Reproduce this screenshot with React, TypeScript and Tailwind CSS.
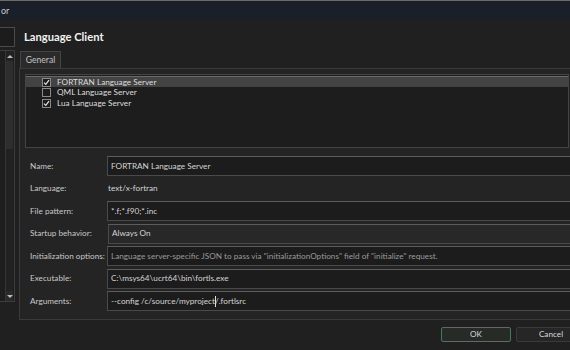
import React from 'react';

const servers = [
  { name: 'FORTRAN Language Server', checked: true, selected: true },
  { name: 'QML Language Server', checked: false, selected: false },
  { name: 'Lua Language Server', checked: true, selected: false },
];

const Check: React.FC<{ on: boolean }> = ({ on }) => (
  <div className="w-[9px] h-[9px] border border-[#8a8a8a] bg-[#1c1c1c] flex items-center justify-center">
    {on && (
      <svg width="7" height="7" viewBox="0 0 7 7">
        <path d="M1 3.6 L2.8 5.4 L6 1.2" fill="none" stroke="#e6e6e6" strokeWidth="1.2" />
      </svg>
    )}
  </div>
);

const Field: React.FC<{ children: React.ReactNode; combo?: boolean }> = ({ children, combo }) => (
  <div
    className={`h-[20px] flex items-center pl-[3px] border border-[#4a4a4a] border-t-[#5c5c5c] -mr-[20px] whitespace-nowrap ${
      combo ? 'bg-[#282828] ml-[1px]' : 'bg-[#1c1c1c]'
    }`}
  >
    {children}
  </div>
);

const App: React.FC = () => {
  return (
    <div className="w-[570px] h-[350px] overflow-hidden bg-[#202020] text-[#d4d4d4] text-[8.2px] leading-none font-['Lato','Open_Sans',sans-serif] flex flex-col">
      {/* Title bar */}
      <div className="h-[20px] shrink-0 bg-[#1b1f2a] border-t border-[#6a6a6a] flex items-center pl-[1px] text-[#c8c8c8] text-[9px]">
        or
      </div>

      <div className="flex flex-1 min-h-0">
        {/* Left: navigation column (cropped) */}
        <div className="w-[30px] -ml-[15px] shrink-0 flex flex-col pt-[7px]">
          <div className="h-[20px] border border-[#4a4a4a] bg-[#1c1c1c]"></div>
          <div className="mt-[3px] h-[252px] border border-[#3c3c3c] bg-[#1e1e1e] flex justify-end pr-[1px]">
            <div className="w-[8px] flex flex-col items-center border-l border-[#353535] bg-[#222]">
              <div className="h-[10px] flex items-center justify-center">
                <div className="w-0 h-0 border-l-[3px] border-r-[3px] border-b-[3px] border-l-transparent border-r-transparent border-b-[#bdbdbd]"></div>
              </div>
              <div className="w-full h-[88px] bg-[#2e2e2e]"></div>
              <div className="flex-1"></div>
              <div className="h-[10px] w-full flex items-center justify-center bg-[#2a2a2a]">
                <div className="w-0 h-0 border-l-[3px] border-r-[3px] border-t-[3px] border-l-transparent border-r-transparent border-t-[#bdbdbd]"></div>
              </div>
            </div>
          </div>
        </div>

        {/* Main */}
        <div className="flex-1 ml-[4px] flex flex-col">
          <div className="h-[31px] flex items-center pl-[5px] pt-[3px]">
            <span className="text-[11.2px] font-bold text-[#f2f2f2]">Language Client</span>
          </div>

          <div className="flex">
            <div className="ml-[1px] w-[41px] h-[17px] border border-b-0 border-[#444] bg-[#2a2a2a] flex items-center justify-center text-[#c4c4c4] text-[8.6px]">
              General
            </div>
          </div>

          <div className="h-[252px] -mr-[20px] border border-[#3a3a3a] bg-[#242424] pt-[5px] pl-[5px]">
            {/* Servers list */}
            <div className="h-[74px] border border-[#444] bg-[#1d1d1d] mr-[20px] pt-[1px]">
              {servers.map((s) => (
                <div
                  key={s.name}
                  className={`h-[11px] flex items-center pl-[16px] gap-[6px] ${
                    s.selected ? 'bg-[#434343] border-t border-[#6a6a6a]' : ''
                  }`}
                >
                  <Check on={s.checked} />
                  <span className="text-[#dcdcdc]">{s.name}</span>
                </div>
              ))}
            </div>

            {/* Form */}
            <div className="mt-[8px] pl-[5px] mr-[20px] grid grid-cols-[77px_1fr] gap-y-[2.5px] items-center">
              <div className="text-[#c8c8c8] whitespace-nowrap">Name:</div>
              <Field>FORTRAN Language Server</Field>

              <div className="text-[#c8c8c8] whitespace-nowrap">Language:</div>
              <div className="h-[20px] flex items-center pl-[1px]">text/x-fortran</div>

              <div className="text-[#c8c8c8] whitespace-nowrap">File pattern:</div>
              <Field>*.f;*.f90;*.inc</Field>

              <div className="text-[#c8c8c8] whitespace-nowrap">Startup behavior:</div>
              <Field combo>Always On</Field>

              <div className="text-[#c8c8c8] whitespace-nowrap">Initialization options:</div>
              <Field>
                <span className="text-[#9a9a9a]">
                  Language server-specific JSON to pass via "initializationOptions" field of "initialize" request.
                </span>
              </Field>

              <div className="text-[#c8c8c8] whitespace-nowrap">Executable:</div>
              <Field>C:\msys64\ucrt64\bin\fortls.exe</Field>

              <div className="text-[#c8c8c8] whitespace-nowrap">Arguments:</div>
              <Field>
                <span>--config /c/source/myproject</span>
                <span className="w-[1px] h-[11px] bg-[#e0e0e0] -mr-[1px]"></span>
                <span>/.fortlsrc</span>
              </Field>
            </div>
          </div>

          {/* Buttons */}
          <div className="mt-[7px] flex justify-end gap-[5px] -mr-[16px]">
            <button className="w-[70px] h-[15px] border border-[#3f7d55] bg-[#262b27] rounded-[2px] text-[#d8d8d8]">
              OK
            </button>
            <button className="w-[70px] h-[15px] border border-[#3a3a3a] bg-[#262626] rounded-[2px] text-[#d8d8d8]">
              Cancel
            </button>
          </div>
        </div>
      </div>
    </div>
  );
};

export default App;
